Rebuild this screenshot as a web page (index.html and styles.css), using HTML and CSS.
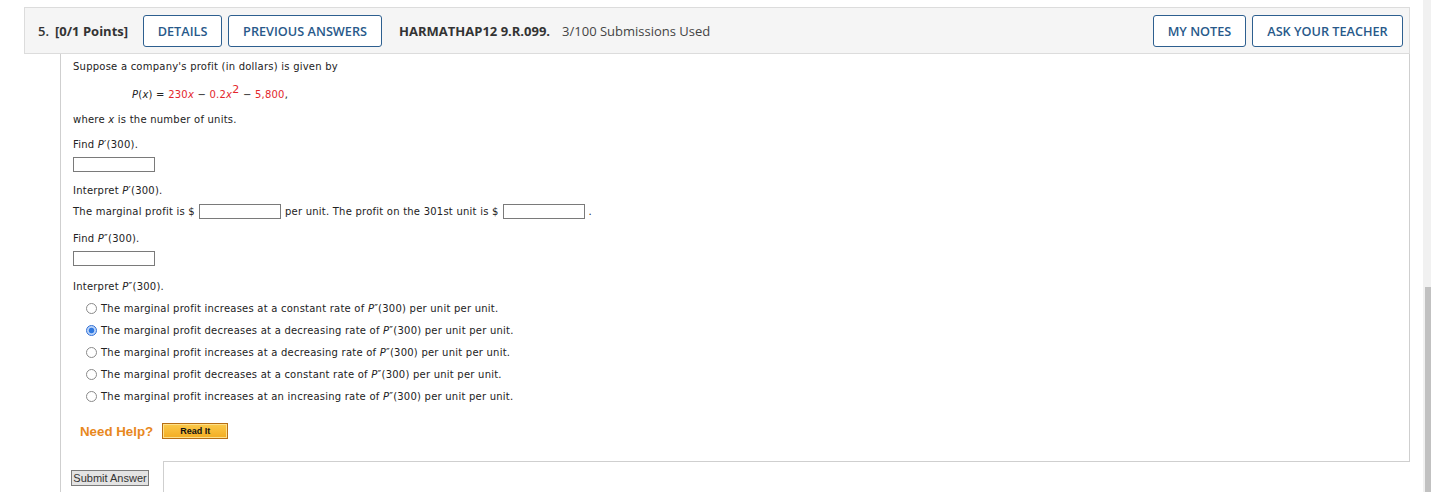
FILE: index.html
```html
<!DOCTYPE html>
<html>
<head>
<meta charset="utf-8">
<link rel="stylesheet" href="styles.css">
</head>
<body>
<div class="panel">
  <div class="qhead">
    <span class="qnum">5.</span>
    <span class="qpts">[0/1 Points]</span>
    <button class="hbtn w-details">DETAILS</button>
    <button class="hbtn w-prev">PREVIOUS ANSWERS</button>
    <span class="qcode">HARMATHAP12 9.R.099.</span>
    <span class="qsubs">3/100 Submissions Used</span>
    <span class="spacer"></span>
    <button class="hbtn w-notes">MY NOTES</button>
    <button class="hbtn w-ask">ASK YOUR TEACHER</button>
  </div>
  <div class="qwrap">
    <div class="qbody">
      <p class="ln">Suppose a company's profit (in dollars) is given by</p>
      <p class="ln formula"><i>P</i>(<i>x</i>) = <span class="red">230<i>x</i></span> − <span class="red">0.2<i>x</i><sup>2</sup></span> − <span class="red">5,800</span>,</p>
      <p class="ln g11">where <i>x</i> is the number of units.</p>
      <p class="ln g11">Find <i>P</i>′(300).</p>
      <div class="inrow"><span class="ans"></span></div>
      <p class="ln g12">Interpret <i>P</i>′(300).</p>
      <div class="mline"><span>The marginal profit is $</span><span class="ans"></span><span>per unit. The profit on the 301st unit is $</span><span class="ans"></span><span>.</span></div>
      <p class="ln g13">Find <i>P</i>″(300).</p>
      <div class="inrow"><span class="ans"></span></div>
      <p class="ln g14">Interpret <i>P</i>″(300).</p>
      <ul class="opts">
        <li><span class="radio"></span>The marginal profit increases at a constant rate of <i>P</i>″(300) per unit per unit.</li>
        <li><span class="radio on"></span>The marginal profit decreases at a decreasing rate of <i>P</i>″(300) per unit per unit.</li>
        <li><span class="radio"></span>The marginal profit increases at a decreasing rate of <i>P</i>″(300) per unit per unit.</li>
        <li><span class="radio"></span>The marginal profit decreases at a constant rate of <i>P</i>″(300) per unit per unit.</li>
        <li><span class="radio"></span>The marginal profit increases at an increasing rate of <i>P</i>″(300) per unit per unit.</li>
      </ul>
      <div class="help">
        <span class="needhelp">Need Help?</span>
        <span class="readit">Read It</span>
      </div>
    </div>
    <div class="qfoot">
      <span class="submit">Submit Answer</span>
      <div class="fbox"></div>
    </div>
  </div>
</div>
<div class="sbar"><div class="thumb"></div></div>
</body>
</html>
```

FILE: styles.css
```css
html, body {
  margin: 0;
  padding: 0;
  background: #fff;
  overflow: hidden;
}
body {
  padding: 7px 0 0 24px;
}
.panel {
  width: 1386px;
}
.qhead {
  box-sizing: border-box;
  height: 47px;
  display: flex;
  align-items: center;
  background: #f5f5f5;
  border: 1px solid #dcdcdc;
  padding: 0 6px 0 13px;
  font-family: "Open Sans", sans-serif;
  font-size: 13px;
  color: #333;
}
.qnum {
  font-weight: 600;
  margin-right: 6px;
}
.qpts {
  font-weight: 700;
  margin-right: 15px;
}
.hbtn {
  box-sizing: border-box;
  height: 32px;
  padding: 0;
  margin-right: 6px;
  background: #fff;
  border: 1px solid #2d5f8f;
  border-radius: 3px;
  color: #28598a;
  font-family: "Open Sans", sans-serif;
  font-size: 12.7px;
  font-weight: 600;
  text-align: center;
  white-space: nowrap;
}
.w-details { width: 79px; }
.w-prev { width: 154px; }
.w-notes { width: 93px; }
.w-ask { width: 151px; margin-right: 0; }
.qcode {
  margin-left: 11px;
  font-weight: 700;
  margin-right: 12px;
}
.qsubs {
  color: #444;
}
.spacer {
  flex: 1;
}
.qwrap {
  margin-left: 36px;
  border-left: 1px solid #cfcfcf;
}
.qbody {
  box-sizing: border-box;
  height: 407px;
  border-right: 1px solid #cfcfcf;
  padding: 6px 0 0 12px;
  font-family: "DejaVu Sans", Verdana, sans-serif;
  font-size: 10px;
  letter-spacing: 0.23px;
  color: #222;
}
.ln {
  margin: 0;
  height: 14px;
  line-height: 14px;
  white-space: nowrap;
}
.formula {
  margin-top: 14px;
  padding-left: 59px;
}
.formula sup {
  font-size: 11px;
  line-height: 0;
  vertical-align: 5px;
}
.red {
  color: #e3262b;
}
.g11 { margin-top: 11px; }
.g12 { margin-top: 12px; }
.g13 { margin-top: 13px; }
.g14 { margin-top: 14px; }
.inrow {
  margin-top: 5px;
  height: 15px;
}
.ans {
  display: inline-block;
  box-sizing: border-box;
  width: 82px;
  height: 15px;
  border: 1px solid #7a7a7a;
  background: #fff;
  vertical-align: middle;
}
.mline {
  margin-top: 5px;
  height: 16px;
  display: flex;
  align-items: center;
  white-space: pre;
}
.mline .ans {
  margin: 0 4px 0 4px;
}
.opts {
  list-style: none;
  margin: 3px 0 0 0;
  padding: 0 0 0 13px;
}
.opts li {
  height: 22px;
  display: flex;
  align-items: center;
  white-space: pre;
}
.radio {
  box-sizing: border-box;
  width: 11px;
  height: 11px;
  border: 1px solid #8a8a8a;
  border-radius: 50%;
  background: #fff;
  margin-right: 4px;
}
.radio.on {
  border-color: #2f6fd6;
  background: radial-gradient(circle, #2f78e0 0 2.4px, #bcd4f8 3.2px);
}
.help {
  margin-top: 16px;
  display: flex;
  align-items: center;
  padding-left: 7px;
  letter-spacing: 0;
}
.needhelp {
  font-family: "Liberation Sans", Arial, sans-serif;
  font-weight: 700;
  font-size: 13.3px;
  color: #e8881e;
}
.readit {
  box-sizing: border-box;
  margin-left: 9px;
  width: 66px;
  height: 16px;
  display: flex;
  align-items: center;
  justify-content: center;
  background: linear-gradient(#fbc94a, #f3ac22);
  border: 1px solid #b86e14;
  box-shadow: inset 0 0 0 1px #fde08a;
  font-family: "Liberation Sans", Arial, sans-serif;
  font-weight: 700;
  font-size: 9px;
  color: #111;
}
.qfoot {
  display: flex;
  height: 31px;
}
.submit {
  box-sizing: border-box;
  margin: 9px 0 0 10px;
  width: 78px;
  height: 16px;
  display: flex;
  align-items: center;
  justify-content: center;
  background: #e3e3e3;
  border: 1px solid #7c7c7c;
  font-family: "Liberation Sans", Arial, sans-serif;
  font-size: 11px;
  color: #333;
}
.fbox {
  flex: 1;
  margin-left: 14px;
  border-top: 1px solid #cfcfcf;
  border-left: 1px solid #cfcfcf;
}
.sbar {
  position: fixed;
  top: 0;
  right: 0;
  width: 8px;
  height: 100%;
  background: #f1f1f1;
}
.sbar .thumb {
  position: absolute;
  top: 287px;
  right: 0;
  bottom: 0;
  width: 6px;
  background: #c1c1c1;
}
```
